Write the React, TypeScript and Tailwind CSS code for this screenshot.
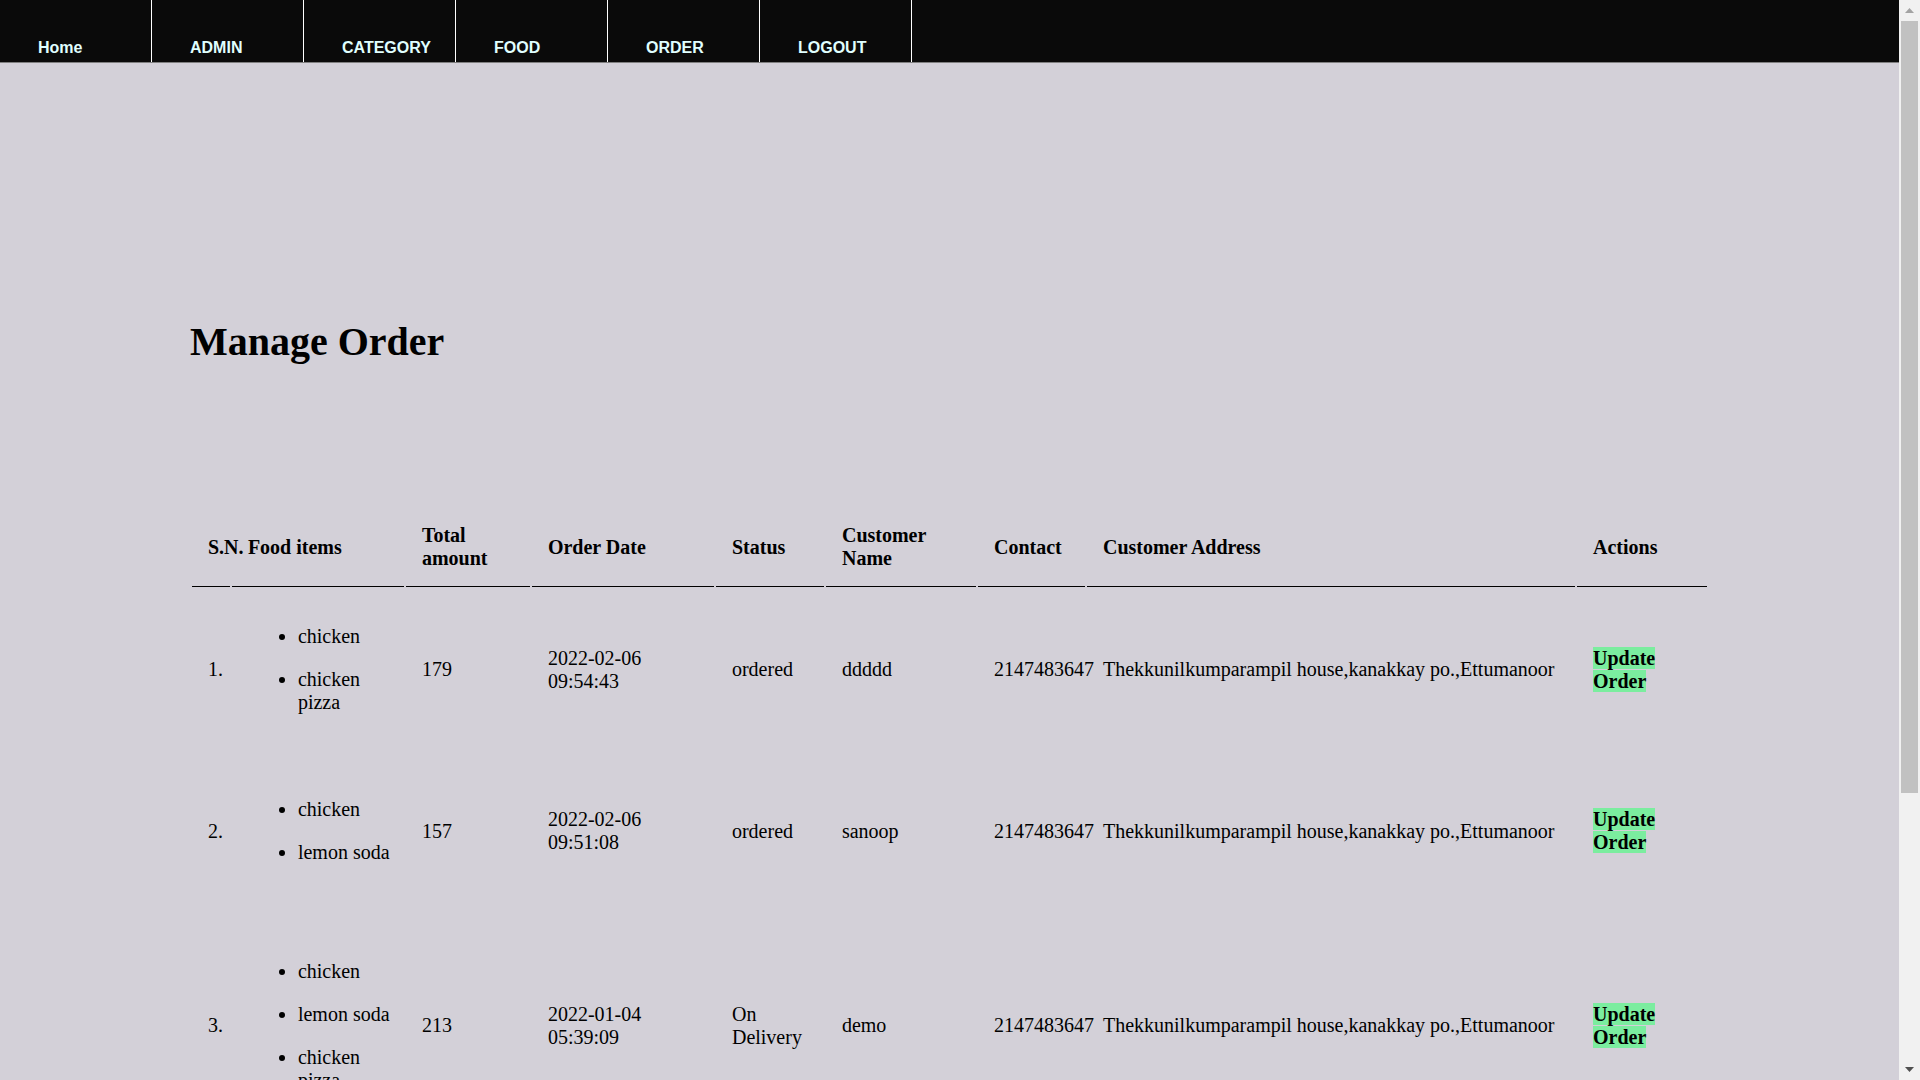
import React from 'react'

const navItems = ['Home', 'ADMIN', 'CATEGORY', 'FOOD', 'ORDER', 'LOGOUT']

const address = 'Thekkunilkumparampil house,kanakkay po.,Ettumanoor'

const orders = [
  {
    sn: '1.',
    items: ['chicken', 'chicken pizza'],
    total: 179,
    date: '2022-02-06 09:54:43',
    status: 'ordered',
    name: 'ddddd',
    height: 'h-[159px]',
  },
  {
    sn: '2.',
    items: ['chicken', 'lemon soda'],
    total: 157,
    date: '2022-02-06 09:51:08',
    status: 'ordered',
    name: 'sanoop',
    height: 'h-[158px]',
  },
  {
    sn: '3.',
    items: ['chicken', 'lemon soda', 'chicken pizza'],
    total: 213,
    date: '2022-01-04 05:39:09',
    status: 'On Delivery',
    name: 'demo',
    height: 'h-[227px]',
  },
]

const headers = [
  'S.N.',
  'Food items',
  'Total amount',
  'Order Date',
  'Status',
  'Customer Name',
  'Contact',
  'Customer Address',
  'Actions',
]

function Scrollbar() {
  return (
    <div className="flex h-full w-[21px] shrink-0 flex-col items-center bg-[#f1f1f1]">
      <div className="flex h-[21px] w-full items-center justify-center">
        <svg width="9" height="5" viewBox="0 0 9 5">
          <polygon points="4.5,0 9,5 0,5" fill="#a3a3a3" />
        </svg>
      </div>
      <div className="h-[772px] w-[17px] bg-[#c1c1c1]" />
      <div className="flex-1" />
      <div className="flex h-[21px] w-full items-center justify-center">
        <svg width="9" height="5" viewBox="0 0 9 5">
          <polygon points="0,0 9,0 4.5,5" fill="#505050" />
        </svg>
      </div>
    </div>
  )
}

export default function App() {
  return (
    <div className="flex h-screen overflow-hidden bg-[#d3d0d8]">
      <div className="w-[1899px] shrink-0 overflow-hidden font-['Liberation_Serif',serif] text-black">
        {/* Menu */}
        <nav className="flex h-[63px] border-b border-[#7f7f7f] bg-[#0a0a0a] font-['Liberation_Sans',Arial,sans-serif]">
          {navItems.map((item) => (
            <a
              key={item}
              href="#"
              className="block h-full w-[152px] border-r border-white pl-[38px] pt-[39px] text-[16px] font-bold leading-[18px] text-[#e0ffff]"
            >
              {item}
            </a>
          ))}
        </nav>

        {/* Main content */}
        <div className="mx-auto w-[80%]">
          <h1 className="mt-[256px] text-[40px] font-bold leading-[46px]">Manage Order</h1>

          <table className="mt-[141px] w-full table-fixed border-separate border-spacing-[2px] text-[20px] leading-[23px]">
            <colgroup>
              <col className="w-[38px]" />
              <col className="w-[172px]" />
              <col className="w-[124px]" />
              <col className="w-[182px]" />
              <col className="w-[108px]" />
              <col className="w-[150px]" />
              <col className="w-[107px]" />
              <col className="w-[488px]" />
              <col className="w-[130px]" />
            </colgroup>
            <thead>
              <tr>
                {headers.map((h) => (
                  <th
                    key={h}
                    className="border-b border-black py-4 pl-4 text-left align-middle font-bold"
                  >
                    {h === 'S.N.' ? <span className="whitespace-nowrap">{h}</span> : h}
                  </th>
                ))}
              </tr>
            </thead>
            <tbody>
              {orders.map((o) => (
                <tr key={o.sn} className={o.height}>
                  <td className="py-4 pl-4 align-middle">{o.sn}</td>
                  <td className="py-4 pl-4 align-middle">
                    <ul className="list-outside list-disc pl-[50px]">
                      {o.items.map((it, i) => (
                        <li key={i} className="my-5">
                          {it}
                        </li>
                      ))}
                    </ul>
                  </td>
                  <td className="py-4 pl-4 align-middle">{o.total}</td>
                  <td className="py-4 pl-4 align-middle">{o.date}</td>
                  <td className="py-4 pl-4 align-middle">{o.status}</td>
                  <td className="py-4 pl-4 align-middle">{o.name}</td>
                  <td className="py-4 pl-4 align-middle">2147483647</td>
                  <td className="py-4 pl-4 align-middle whitespace-nowrap">{address}</td>
                  <td className="py-4 pl-4 align-middle">
                    <a href="#" className="bg-[#7bed9f] font-bold text-black">
                      Update Order
                    </a>
                  </td>
                </tr>
              ))}
            </tbody>
          </table>
        </div>
      </div>
      <Scrollbar />
    </div>
  )
}
